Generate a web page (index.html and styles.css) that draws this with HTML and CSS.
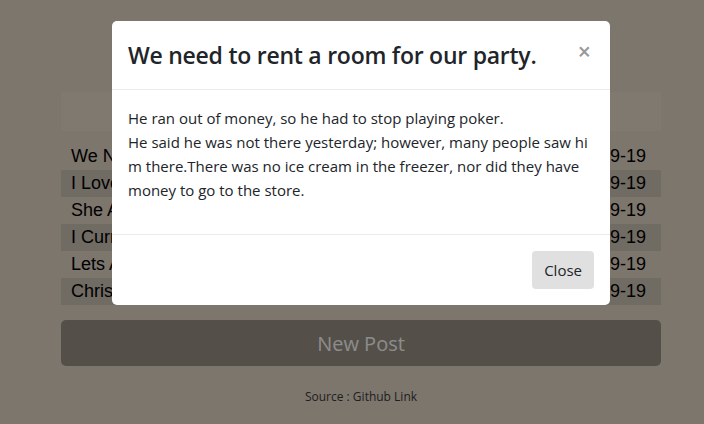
FILE: index.html
```html
<!DOCTYPE html>
<html lang="en">
<head>
<meta charset="utf-8">
<title>Posts</title>
<link rel="stylesheet" href="styles.css">
</head>
<body>
<div class="page">
  <div class="container">
    <div class="banner"></div>
    <div class="posts">
      <div class="row"><span>We Need To Rent A Room</span><span>2019-09-19</span></div>
      <div class="row"><span>I Love Eating Toasted Cheese</span><span>2019-09-19</span></div>
      <div class="row"><span>She Always Speaks To Him</span><span>2019-09-19</span></div>
      <div class="row"><span>I Currently Have 4 Windows</span><span>2019-09-19</span></div>
      <div class="row"><span>Lets All Be Unique Together</span><span>2019-09-19</span></div>
      <div class="row"><span>Christmas Is Coming</span><span>2019-09-19</span></div>
    </div>
    <button class="new-post">New Post</button>
    <p class="source">Source : Github Link</p>
  </div>
</div>
<div class="backdrop">
  <div class="dialog">
    <div class="modal-header">
      <h4 class="modal-title">We need to rent a room for our party.</h4>
      <span class="close">&times;</span>
    </div>
    <div class="modal-body">
      <p>He ran out of money, so he had to stop playing poker.<br>He said he was not there yesterday; however, many people saw him there.There was no ice cream in the freezer, nor did they have money to go to the store.</p>
    </div>
    <div class="modal-footer">
      <button class="btn-close">Close</button>
    </div>
  </div>
</div>
</body>
</html>
```
FILE: styles.css
```css
* { box-sizing: border-box; }
html, body { margin: 0; height: 100%; }
body {
  background: #e3d7c6;
  font-family: "Open Sans", "Noto Sans", sans-serif;
  overflow: hidden;
}
.page { padding-left: 18px; }
.container {
  width: 600px;
  margin: 0 auto;
  padding-top: 92px;
}
.banner {
  height: 39px;
  background: #e7dccb;
}
.posts {
  margin-top: 12px;
  font-family: "Liberation Sans", Arial, sans-serif;
  font-size: 18px;
  color: #000;
}
.row {
  height: 27px;
  display: flex;
  justify-content: space-between;
  align-items: center;
  padding: 0 15px 0 10px;
}
.row:nth-child(even) { background: #cdc3b4; }
.new-post {
  display: block;
  width: 100%;
  height: 46px;
  margin-top: 15px;
  border: none;
  border-radius: 5px;
  background: #999083;
  color: #fff;
  font-family: "Open Sans", "Noto Sans", sans-serif;
  font-size: 20px;
}
.source {
  margin: 22px 0 0;
  text-align: center;
  font-size: 12px;
  color: #3a3a3a;
}
.backdrop {
  position: fixed;
  inset: 0;
  background: rgba(0, 0, 0, 0.45);
  padding-left: 18px;
}
.dialog {
  width: 498px;
  margin: 21px auto 0;
  background: #fff;
  border-radius: 5px;
  color: #212529;
}
.modal-header {
  display: flex;
  justify-content: space-between;
  align-items: flex-start;
  padding: 16px;
  border-bottom: 1px solid #e9ecef;
}
.modal-title {
  margin: 0;
  font-size: 23px;
  font-weight: 600;
  line-height: 36px;
  letter-spacing: -0.25px;
}
.close {
  font-size: 23px;
  font-weight: 600;
  line-height: 1;
  color: #999;
  margin-top: 3px;
  margin-right: 3px;
}
.modal-body {
  padding: 16px;
}
.modal-body p {
  margin: 0 0 16px;
  font-size: 15px;
  line-height: 24px;
  word-break: break-all;
}
.modal-footer {
  display: flex;
  justify-content: flex-end;
  padding: 16px;
  border-top: 1px solid #e9ecef;
}
.btn-close {
  height: 38px;
  padding: 0 12px;
  border: none;
  border-radius: 4px;
  background: #e0e0e0;
  color: #212529;
  font-family: "Open Sans", "Noto Sans", sans-serif;
  font-size: 15px;
}
```
